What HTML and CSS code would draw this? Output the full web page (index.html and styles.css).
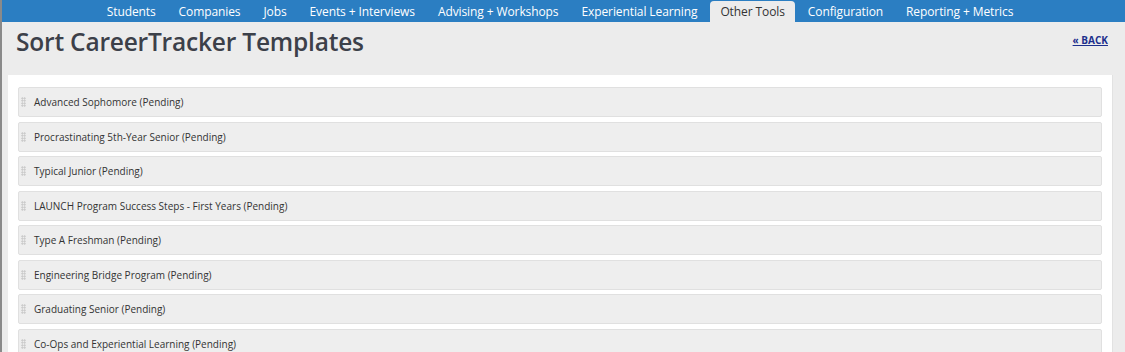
FILE: index.html
```html
<!DOCTYPE html>
<html lang="en">
<head>
  <meta charset="UTF-8">
  <title>Sort CareerTracker Templates</title>
  <link rel="stylesheet" href="styles.css">
</head>
<body>

  <div class="nav">
    <a href="#">Students</a>
    <a href="#">Companies</a>
    <a href="#">Jobs</a>
    <a href="#">Events + Interviews</a>
    <a href="#">Advising + Workshops</a>
    <a href="#">Experiential Learning</a>
    <a href="#" class="active">Other Tools</a>
    <a href="#">Configuration</a>
    <a href="#">Reporting + Metrics</a>
  </div>

  <div class="page">
    <div class="header">
      <h1>Sort CareerTracker Templates</h1>
      <a href="#" class="back">&laquo; BACK</a>
    </div>

    <div class="panel">
      <ul class="sortable" id="lista">
        <!-- items -->
      </ul>
    </div>
  </div>

  <script>
    var templates = [
      "Advanced Sophomore (Pending)",
      "Procrastinating 5th-Year Senior (Pending)",
      "Typical Junior (Pending)",
      "LAUNCH Program Success Steps - First Years (Pending)",
      "Type A Freshman (Pending)",
      "Engineering Bridge Program (Pending)",
      "Graduating Senior (Pending)",
      "Co-Ops and Experiential Learning (Pending)"
    ];
    var lista = document.getElementById("lista");
    for (var i = 0; i < templates.length; i++) {
      var li = document.createElement("li");
      li.innerHTML = '<span class="handle"></span><span class="name"></span>';
      li.querySelector(".name").textContent = templates[i];
      lista.appendChild(li);
    }
  </script>

</body>
</html>
```

FILE: styles.css
```css
body {
  margin: 0;
  font-family: 'Open Sans', 'Noto Sans', sans-serif;
  background: #ececec;
  color: #333;
  border-left: 2px solid #8a8a8a;
  height: 352px;
  box-sizing: border-box;
  overflow: hidden;
}

.nav {
  background: #2b7ec2;
  height: 22px;
  display: flex;
  justify-content: center;
  align-items: flex-end;
  margin-left: -2px;
  padding-right: 5px;
}

.nav a {
  color: #fff;
  text-decoration: none;
  font-size: 12px;
  letter-spacing: -0.1px;
  line-height: 21px;
  padding: 0 11.5px;
}

.nav a.active {
  background: #ececec;
  color: #333;
  border-radius: 4px 4px 0 0;
  padding: 0 10px;
  margin: 0 1.5px;
}

.page {
  padding: 0 8px 0 6px;
}

.header {
  display: flex;
  justify-content: space-between;
  align-items: flex-start;
  height: 53px;
}

h1 {
  margin: 3px 0 0 8px;
  font-size: 24.5px;
  font-weight: 600;
  color: #3c4049;
  letter-spacing: -0.2px;
}

.back {
  margin-top: 11px;
  margin-right: 9px;
  font-size: 10px;
  font-weight: bold;
  color: #1c2f8c;
}

.panel {
  background: #fff;
  padding: 12px 10px 0 10px;
  margin-right: 4px;
  border-right: 1px solid #e2e2e2;
  height: 300px;
  overflow: hidden;
}

.sortable {
  list-style: none;
  margin: 0;
  padding: 0;
}

.sortable li {
  display: flex;
  align-items: center;
  height: 28px;
  margin-bottom: 4.5px;
  background: #eeeeee;
  border: 1px solid #e0e0e0;
  border-radius: 2px;
  font-size: 10px;
  color: #333;
}

.handle {
  width: 5px;
  height: 10px;
  margin: 0 8px 0 2px;
  background-image: radial-gradient(circle, #c4c4c4 0.8px, transparent 1px);
  background-size: 2.5px 2.5px;
}
```
